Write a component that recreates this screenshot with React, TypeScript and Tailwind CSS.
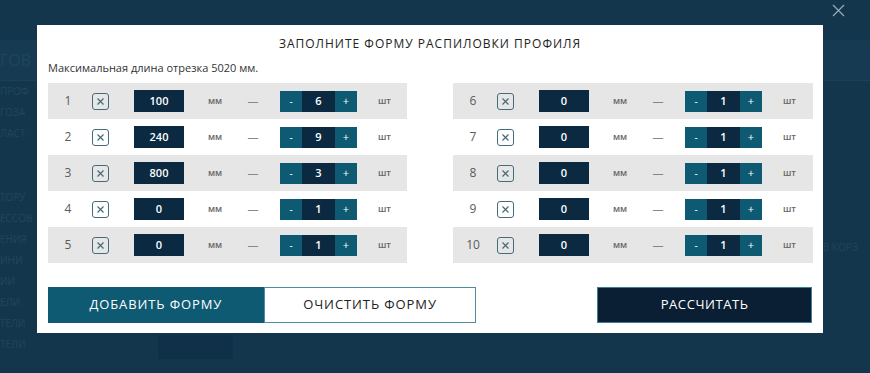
import React from "react";

const left = [
  { n: 1, len: "100", q: "6" },
  { n: 2, len: "240", q: "9" },
  { n: 3, len: "800", q: "3" },
  { n: 4, len: "0", q: "1" },
  { n: 5, len: "0", q: "1" },
];
const right = [
  { n: 6, len: "0", q: "1" },
  { n: 7, len: "0", q: "1" },
  { n: 8, len: "0", q: "1" },
  { n: 9, len: "0", q: "1" },
  { n: 10, len: "0", q: "1" },
];

function Row({ n, len, q, gray }: { n: number; len: string; q: string; gray: boolean }) {
  return (
    <div className={`flex items-center h-[36px] ${gray ? "bg-[#e6e6e6]" : "bg-white"}`}>
      <div className="w-[40px] text-center text-[12px] text-[#5a5a5a]">{n}</div>
      <div className="ml-[4px] w-[17px] h-[17px] rounded-[3px] border-[1.5px] border-[#456b7c] flex items-center justify-center">
        <svg width="9" height="9" viewBox="0 0 9 9">
          <path d="M1.5 1.5 L7.5 7.5 M7.5 1.5 L1.5 7.5" stroke="#456b7c" strokeWidth="1.2" />
        </svg>
      </div>
      <div className="ml-[25px] w-[50px] h-[22px] bg-[#0b2a42] text-white text-[11px] font-semibold flex items-center justify-center">
        {len}
      </div>
      <div className="w-[62px] text-center text-[9px] text-[#666] font-semibold">мм</div>
      <div className="w-[14px] text-center text-[11px] text-[#888]">—</div>
      <div className="ml-[20px] flex h-[21px] w-[77px]">
        <div className="w-[22px] bg-[#0e5a73] text-white text-[10px] flex items-center justify-center">-</div>
        <div className="w-[33px] bg-[#0b2a42] text-white text-[11px] font-semibold flex items-center justify-center">{q}</div>
        <div className="w-[22px] bg-[#0e5a73] text-white text-[11px] flex items-center justify-center">+</div>
      </div>
      <div className="ml-[21px] text-[9px] text-[#666] font-semibold">шт</div>
    </div>
  );
}

export default function App() {
  const bgText = [
    { y: "top-[48px]", t: "ГОВ", cls: "text-[16px]" },
    { y: "top-[84px]", t: "ПРОФ", cls: "text-[10px]" },
    { y: "top-[105px]", t: "ГОЗА", cls: "text-[10px]" },
    { y: "top-[126px]", t: "ЛАСТ", cls: "text-[10px]" },
  ];
  return (
    <div
      className="relative w-[870px] h-[373px] overflow-hidden bg-[#14364d]"
      style={{ fontFamily: "'Open Sans', 'Noto Sans', sans-serif" }}
    >
      {/* faint underlying page */}
      <div className="absolute left-0 top-[40px] w-[870px] h-[40px] bg-[#153a52]" />
      <div className="absolute left-0 top-[80px] w-[870px] h-px bg-[#1a4159]" />
      {bgText.map((b) => (
        <div key={b.t} className={`absolute left-0 ${b.y} ${b.cls} text-[#1f465e]`}>
          {b.t}
        </div>
      ))}
      <div className="absolute left-0 top-[190px] flex flex-col gap-[7px] text-[10px] text-[#1f465e] leading-[14px]">
        <div>ТОРУ</div>
        <div>ЕССОВ</div>
        <div>ЕНИЯ</div>
        <div>ИНИ</div>
        <div>ИИ</div>
        <div>ЕЛИ</div>
        <div>ТЕЛИ</div>
        <div>ТЕЛИ</div>
      </div>
      <div className="absolute left-[158px] top-[335px] w-[75px] h-[24px] bg-[#10304a]" />
      <div className="absolute left-[823px] top-[240px] text-[10px] text-[#1d445c]">В КОРЗ</div>

      {/* close */}
      <svg className="absolute left-[832px] top-[4px]" width="13" height="13" viewBox="0 0 13 13">
        <path d="M1 1 L12 12 M12 1 L1 12" stroke="#9aabb8" strokeWidth="1.2" />
      </svg>

      {/* modal */}
      <div className="absolute left-[37px] top-[25px] w-[786px] h-[308px] bg-white px-[11px]">
        <div className="pt-[11px] text-center text-[12px] text-[#222] tracking-[1px] leading-[16px]">
          ЗАПОЛНИТЕ ФОРМУ РАСПИЛОВКИ ПРОФИЛЯ
        </div>
        <div className="mt-[9px] text-[11px] text-[#333] leading-[14px]">Максимальная длина отрезка 5020 мм.</div>
        <div className="mt-[8px] grid grid-cols-[359px_360px] gap-x-[46px]">
          <div className="flex flex-col">
            {left.map((r, i) => (
              <Row key={r.n} {...r} gray={i % 2 === 0} />
            ))}
          </div>
          <div className="flex flex-col">
            {right.map((r, i) => (
              <Row key={r.n} {...r} gray={i % 2 === 0} />
            ))}
          </div>
        </div>
        <div className="mt-[24px] flex">
          <div className="w-[216px] h-[36px] bg-[#0e5a73] border border-[#0e5a73] text-white text-[13px] flex items-center justify-center tracking-[0.9px]">
            ДОБАВИТЬ ФОРМУ
          </div>
          <div className="w-[213px] h-[36px] bg-white border border-[#4e8da1] text-[#222] text-[13px] flex items-center justify-center tracking-[0.9px]">
            ОЧИСТИТЬ ФОРМУ
          </div>
          <div className="ml-[121px] w-[215px] h-[36px] bg-[#0b1f34] border border-[#3f7f94] text-white text-[13px] flex items-center justify-center tracking-[0.6px]">
            РАССЧИТАТЬ
          </div>
        </div>
      </div>
    </div>
  );
}
